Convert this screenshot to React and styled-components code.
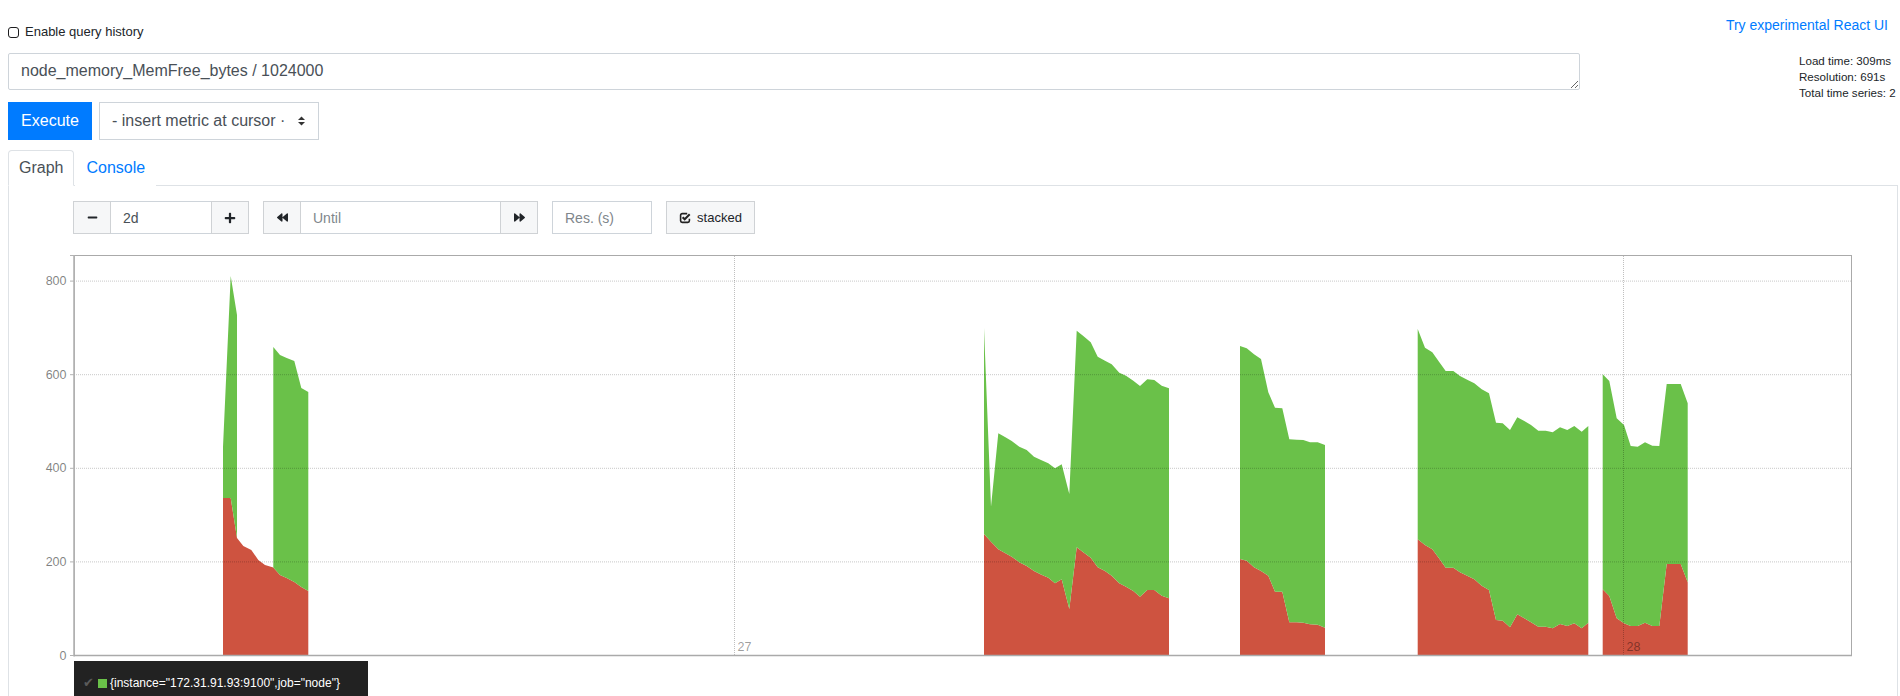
import React from 'react';
import styled, { createGlobalStyle } from 'styled-components';
import { FaMinus, FaPlus, FaBackward, FaForward } from 'react-icons/fa';

const GlobalStyle = createGlobalStyle`
  html, body {
    margin: 0;
    padding: 0;
    height: 100%;
    overflow: hidden;
    background: #fff;
  }
  body {
    font-family: "Liberation Sans", Arial, sans-serif;
    color: #212529;
  }
`;

const Page = styled.div`
  padding: 0 2px 0 8px;
`;

const Header = styled.div`
  display: flex;
  justify-content: space-between;
`;

const LeftColumn = styled.div`
  display: flex;
  flex-direction: column;
  width: 1572px;
`;

const RightColumn = styled.div`
  display: flex;
  flex-direction: column;
  align-items: flex-end;
`;

const HistoryLabel = styled.label`
  display: flex;
  align-items: center;
  margin-top: 24px;
  font-size: 13px;
  line-height: 16px;
`;

const Checkbox = styled.input`
  appearance: none;
  box-sizing: border-box;
  width: 11px;
  height: 11px;
  margin: 0 6px 0 0;
  border: 1.6px solid #1d1d1f;
  border-radius: 3px;
  background: #fff;
`;

const QueryInput = styled.textarea`
  box-sizing: border-box;
  margin-top: 13px;
  width: 100%;
  height: 37px;
  padding: 5px 12px;
  border: 1px solid #ced4da;
  border-radius: 2px;
  font-family: inherit;
  font-size: 16px;
  line-height: 24px;
  color: #495057;
  overflow: hidden;
`;

const ActionRow = styled.div`
  display: flex;
  margin-top: 12px;
  gap: 7px;
`;

const ExecuteButton = styled.button`
  width: 84px;
  height: 38px;
  border: 1px solid #007bff;
  background: #007bff;
  color: #fff;
  font-family: inherit;
  font-size: 16px;
  padding: 0;
`;

const MetricSelect = styled.div`
  box-sizing: border-box;
  display: flex;
  align-items: center;
  justify-content: space-between;
  width: 220px;
  height: 38px;
  padding: 0 13px 0 12px;
  border: 1px solid #ced4da;
  font-size: 16px;
  color: #495057;
`;

const ReactLink = styled.a`
  margin-top: 17px;
  margin-right: 10px;
  font-size: 14px;
  line-height: 16px;
  color: #007bff;
  text-decoration: none;
`;

const Stats = styled.div`
  width: 99px;
  margin-top: 20px;
  font-size: 11.6px;
  line-height: 16px;
  white-space: nowrap;
`;

const TabList = styled.div`
  display: flex;
  margin-top: 10px;
  border-bottom: 1px solid #dee2e6;
`;

const Tab = styled.div`
  padding: 6px 10px;
  margin-bottom: -1px;
  margin-right: 1px;
  font-size: 16px;
  line-height: 22px;
  border: 1px solid ${(p) => (p.$active ? '#dee2e6' : 'transparent')};
  border-bottom-color: ${(p) => (p.$active ? '#fff' : 'transparent')};
  border-radius: 4px 4px 0 0;
  background: #fff;
  color: ${(p) => (p.$active ? '#495057' : '#007bff')};
`;

const TabPanel = styled.div`
  border: 1px solid #dee2e6;
  border-top: none;
  min-height: 560px;
`;

const Controls = styled.div`
  display: flex;
  padding: 15px 0 0 64px;
  gap: 14px;
`;

const ControlGroup = styled.div`
  display: flex;
`;

const ControlButton = styled.div`
  box-sizing: border-box;
  display: flex;
  align-items: center;
  justify-content: center;
  gap: 6px;
  width: ${(p) => p.$width || 38}px;
  height: 33px;
  border: 1px solid #cfd2d5;
  background: #f6f7f8;
  color: #212529;
  font-size: 13px;
`;

const ControlInput = styled.div`
  box-sizing: border-box;
  display: flex;
  align-items: center;
  width: ${(p) => p.$width}px;
  height: 33px;
  padding-left: 12px;
  border: 1px solid #ced4da;
  border-left-width: ${(p) => (p.$joined ? 0 : 1)}px;
  border-right-width: ${(p) => (p.$joined ? 0 : 1)}px;
  font-size: 14px;
  color: ${(p) => (p.$placeholder ? '#80868b' : '#495057')};
`;

const ChartSvg = styled.svg`
  display: block;
  margin-top: 2px;
  overflow: visible;
`;

const Legend = styled.div`
  display: flex;
  align-items: flex-start;
  width: 294px;
  height: 40px;
  margin-left: 65px;
  padding: 15px 0 0 9px;
  box-sizing: border-box;
  background: #222;
  color: #fff;
  font-size: 12px;
  line-height: 14px;
`;

const LegendCheck = styled.span`
  width: 10px;
  color: #5a5a5a;
  font-size: 13px;
`;

const LegendSwatch = styled.span`
  width: 9px;
  height: 9px;
  margin: 3px 3px 0 5px;
  background: #6ac149;
`;

const GREEN = '#6ac149';
const RED = '#ce5340';
const OX = 9;
const OY = 236;
const LEFT = 74;
const RIGHT = 1852;
const TOP = 256;
const BASE = 655.5;

const clusters = [
  [
    [223, 498, 447], [230.7, 498, 276], [237, 538, 315],
    [243.3, 546, null], [251.3, 550, null], [258.3, 560, null], [265, 565, null],
    [273.3, 567.5, 347], [280, 575, 355], [286.7, 578, 358], [294.3, 582, 361],
    [301.3, 587, 388], [308.3, 591, 392],
  ],
  [
    [984, 534, 328], [991, 541.7, 506.7], [998.3, 549.3, 433.3], [1005, 553, 437],
    [1011.7, 556.7, 441], [1019.3, 562.3, 446.7], [1026.7, 566, 450], [1034, 571, 456.7],
    [1041, 574.5, 460], [1048.3, 577.7, 463.3], [1055, 583.3, 468.3], [1061.7, 579.3, 464.3],
    [1069.3, 609, 494], [1076.7, 547.3, 330.7], [1083.3, 552.3, 336], [1090.7, 557.7, 342.3],
    [1097.7, 567.3, 356.7], [1105, 571, 360.7], [1111.7, 575.7, 364.3], [1119.3, 583.3, 372.7],
    [1126, 586.7, 375.7], [1133.3, 591, 380.7], [1140, 596.7, 386], [1147.3, 590, 379.3],
    [1154.3, 590, 380], [1161.7, 595.7, 385.7], [1169, 598.3, 388.3],
  ],
  [
    [1240, 559, 346], [1246.7, 560.7, 348.3], [1254, 567.3, 354.3], [1261, 571, 359],
    [1268.3, 575.7, 392.3], [1275, 591.7, 407.7], [1282.3, 591.7, 408.3], [1289.3, 622.3, 439.3],
    [1296.7, 622.3, 439.7], [1303.3, 622.7, 440], [1310, 624.3, 442.3], [1317.7, 624.7, 442.3],
    [1325, 627.7, 445],
  ],
  [
    [1417.7, 539.3, 329], [1425, 545, 347.7], [1432.3, 549.3, 352.3], [1439, 558.3, 361.7],
    [1445.7, 567.7, 371], [1453.3, 567.7, 371], [1460, 572.3, 376], [1467.7, 576, 380],
    [1474.3, 579.3, 383.3], [1481.7, 585.7, 389.3], [1489, 590, 393.3], [1496, 620, 422.7],
    [1502.7, 620.7, 423.3], [1510, 627.3, 430], [1517.3, 614.3, 417.3], [1524.3, 618.3, 421],
    [1531, 622.3, 425], [1538.3, 626.7, 430.7], [1545.7, 626.7, 430.7], [1552.7, 628.3, 432.3],
    [1560, 624, 427.3], [1567.3, 626, 430], [1574.3, 623.3, 426], [1581.7, 628.3, 431.7],
    [1588.3, 622.7, 426],
  ],
  [
    [1602.7, 589.3, 374.3], [1609.3, 596, 381], [1616.7, 618.3, 418.3], [1624, 623.3, 425],
    [1630.7, 626, 446], [1637.7, 626, 446.7], [1645, 622.7, 442.3], [1652.3, 626, 445.7],
    [1659.3, 626, 446], [1666.7, 564, 384], [1673.3, 564, 384], [1680.7, 564, 384],
    [1687.7, 582.3, 403.3],
  ],
];

const pts = (list) => list.map(([x, y]) => `${x},${y}`).join(' ');

const redShape = (c) =>
  pts([...c.map((p) => [p[0], p[1]]), [c[c.length - 1][0], BASE], [c[0][0], BASE]]);

const greenShapes = (c) => {
  const runs = [];
  let run = [];
  c.forEach((p) => {
    if (p[2] === null) {
      if (run.length) runs.push(run);
      run = [];
    } else {
      run.push(p);
    }
  });
  if (run.length) runs.push(run);
  return runs.map((r) =>
    pts([...r.map((p) => [p[0], p[2]]), ...[...r].reverse().map((p) => [p[0], p[1]])])
  );
};

const yTicks = [
  { label: '800', y: 281.1 },
  { label: '600', y: 374.7 },
  { label: '400', y: 468.3 },
  { label: '200', y: 561.9 },
  { label: '0', y: BASE },
];

const xTicks = [
  { label: '27', x: 734.5 },
  { label: '28', x: 1623.5 },
];

const Chart = () => (
  <ChartSvg width="1888" height="425">
    <g transform={`translate(${-OX},${-OY})`}>
      {clusters.map((c, i) => (
        <g key={i}>
          <polygon points={redShape(c)} fill={RED} />
          {greenShapes(c).map((s, j) => (
            <polygon key={j} points={s} fill={GREEN} />
          ))}
        </g>
      ))}
      {yTicks.slice(0, 4).map((t) => (
        <line key={t.label} x1={LEFT} x2={RIGHT} y1={t.y} y2={t.y}
          stroke="rgba(0,0,0,0.22)" strokeDasharray="1 1" />
      ))}
      {xTicks.map((t) => (
        <g key={t.label}>
          <line x1={t.x} x2={t.x} y1={TOP} y2={BASE}
            stroke="rgba(0,0,0,0.25)" strokeDasharray="1 1" />
          <text x={t.x + 3} y={651} fontSize="12.5" fill="rgba(0,0,0,0.4)"
            fontFamily="Liberation Sans, Arial, sans-serif">{t.label}</text>
        </g>
      ))}
      <rect x={LEFT + 0.5} y={TOP - 0.5} width={RIGHT - LEFT - 1} height={BASE - TOP + 0.5}
        fill="none" stroke="#aaa" />
      <line x1={LEFT} x2={LEFT} y1={TOP - 1} y2={BASE + 1} stroke="#b3b3b3" strokeWidth="1.6" />
      <line x1={LEFT} x2={RIGHT} y1={BASE} y2={BASE} stroke="#aaa" strokeWidth="1.4" />
      <line x1={70} x2={LEFT} y1={TOP - 0.5} y2={TOP - 0.5} stroke="#b3b3b3" />
      {yTicks.map((t) => (
        <g key={t.label}>
          <line x1={70} x2={LEFT} y1={t.y} y2={t.y} stroke="#b3b3b3" />
          <text x={66.5} y={t.y + 4} textAnchor="end" fontSize="12.5" fill="rgba(0,0,0,0.5)"
            fontFamily="Liberation Sans, Arial, sans-serif">{t.label}</text>
        </g>
      ))}
    </g>
  </ChartSvg>
);

const SelectArrows = () => (
  <svg width="7" height="10" viewBox="0 0 7 10">
    <polygon points="0,4 3.5,0.5 7,4" fill="#333" />
    <polygon points="0,6 3.5,9.5 7,6" fill="#333" />
  </svg>
);

const CheckSquare = () => (
  <svg width="12" height="12" viewBox="0 0 12 12">
    <path d="M8.2 1.6H3.2A1.6 1.6 0 0 0 1.6 3.2v5.6a1.6 1.6 0 0 0 1.6 1.6h5.6a1.6 1.6 0 0 0 1.6-1.6V6.8"
      fill="none" stroke="#222" strokeWidth="1.6" />
    <path d="M3.6 5.2l2.1 2.1 5-5" fill="none" stroke="#222" strokeWidth="2" />
  </svg>
);

const App = () => (
  <Page>
    <GlobalStyle />
    <Header>
      <LeftColumn>
        <HistoryLabel>
          <Checkbox type="checkbox" />
          Enable query history
        </HistoryLabel>
        <QueryInput defaultValue="node_memory_MemFree_bytes / 1024000" />
        <ActionRow>
          <ExecuteButton>Execute</ExecuteButton>
          <MetricSelect>
            <span>- insert metric at cursor ·</span>
            <SelectArrows />
          </MetricSelect>
        </ActionRow>
      </LeftColumn>
      <RightColumn>
        <ReactLink href="#">Try experimental React UI</ReactLink>
        <Stats>
          <div>Load time: 309ms</div>
          <div>Resolution: 691s</div>
          <div>Total time series: 2</div>
        </Stats>
      </RightColumn>
    </Header>

    <TabList>
      <Tab $active>Graph</Tab>
      <Tab>Console</Tab>
    </TabList>
    <TabPanel>
      <Controls>
        <ControlGroup>
          <ControlButton><FaMinus size={11} /></ControlButton>
          <ControlInput $width={100} $joined>2d</ControlInput>
          <ControlButton $width={38}><FaPlus size={12} /></ControlButton>
        </ControlGroup>
        <ControlGroup>
          <ControlButton><FaBackward size={11} /></ControlButton>
          <ControlInput $width={199} $joined $placeholder>Until</ControlInput>
          <ControlButton><FaForward size={11} /></ControlButton>
        </ControlGroup>
        <ControlInput $width={100} $placeholder>Res. (s)</ControlInput>
        <ControlButton $width={89}>
          <CheckSquare />
          stacked
        </ControlButton>
      </Controls>
      <Chart />
      <Legend>
        <LegendCheck>✔</LegendCheck>
        <LegendSwatch />
        <span>{'{instance="172.31.91.93:9100",job="node"}'}</span>
      </Legend>
    </TabPanel>
  </Page>
);

export default App;
